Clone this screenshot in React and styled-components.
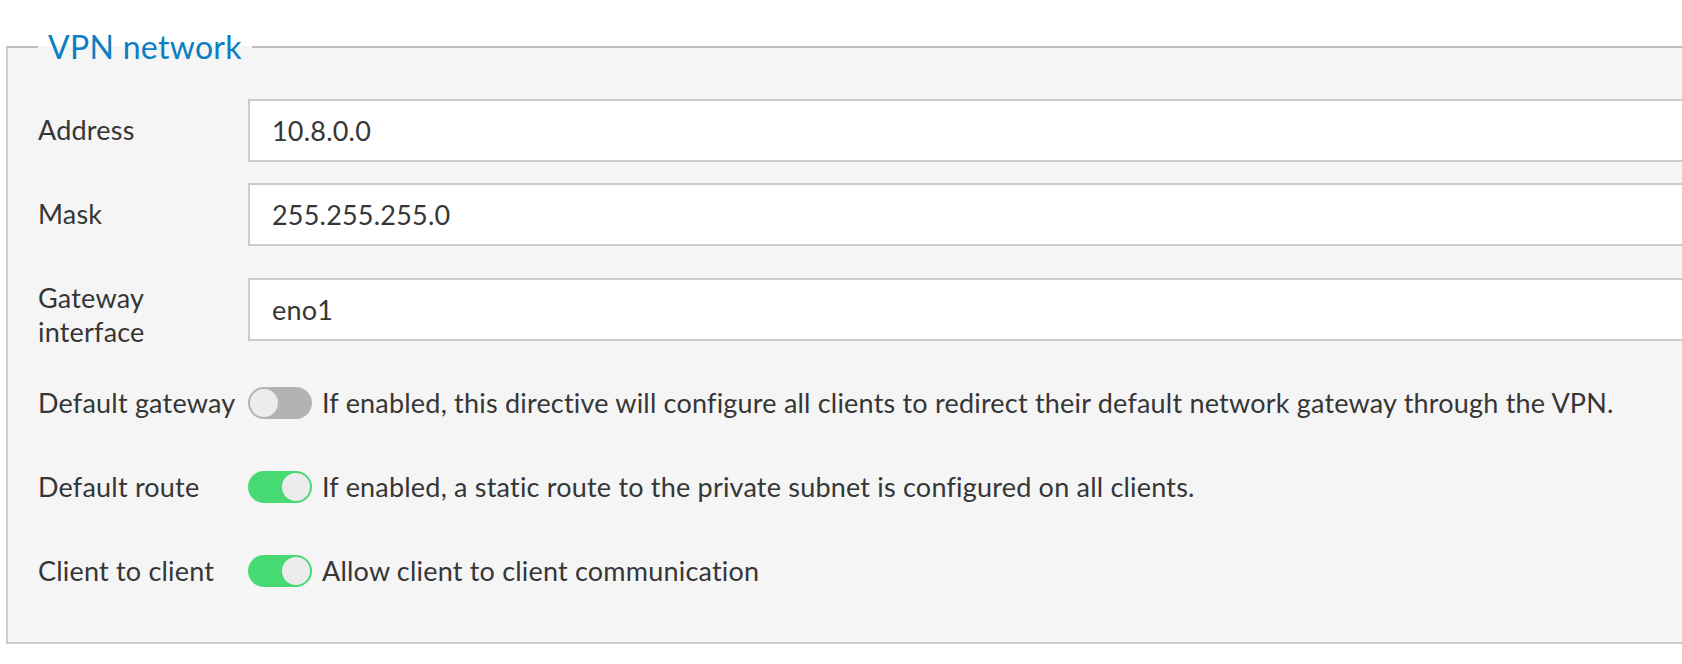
import React from "react";
import styled, { createGlobalStyle } from "styled-components";

const FONT = `Lato, "Liberation Sans", sans-serif`;

const GlobalStyle = createGlobalStyle`
    html, body {
        margin: 0;
        padding: 0;
        background: #fff;
        overflow: hidden;
    }
    body {
        font-family: ${FONT};
        color: #363636;
    }
`

const Page = styled.div`
    padding: 27px 0 0 6px;
    width: 1900px;
`

const Fieldset = styled.fieldset`
    margin: 0;
    padding: 32px 30px 19px 30px;
    border: 2px solid #cccccc;
    border-top-color: #bdbdbd;
    background: #f5f5f5;
    min-width: 0;
`

const Legend = styled.legend`
    padding: 0 10px;
    font-family: ${FONT};
    font-size: 32px;
    line-height: 40px;
    letter-spacing: 0.3px;
    color: #0b7fc1;
`

const FieldRow = styled.div`
    display: flex;
    align-items: flex-start;
    min-height: 63px;
    margin-bottom: 21px;
`

const Label = styled.label`
    flex: 0 0 210px;
    padding: 14px 0 1px 0;
    font-size: 27px;
    line-height: 34px;
    letter-spacing: 0.2px;
    color: #363636;
`

const TextInput = styled.input`
    flex: 1;
    box-sizing: border-box;
    height: 63px;
    margin: ${(p) => p.$offset || 0}px 0 0 0;
    padding: 0 22px;
    border: 2px solid #cccccc;
    border-radius: 0;
    background: #fff;
    font-family: ${FONT};
    font-size: 27px;
    letter-spacing: 0.2px;
    color: #363636;
    outline: none;
`

const ToggleRow = styled.div`
    display: flex;
    align-items: center;
    min-height: 63px;
    margin-bottom: 21px;
`

const ToggleLabel = styled(Label)`
    padding: 0;
`

const Track = styled.span`
    position: relative;
    flex: 0 0 64px;
    box-sizing: border-box;
    height: 32px;
    margin-right: 10px;
    border-radius: 16px;
    border: 2px solid ${(p) => (p.$on ? "#48da72" : "#b3b3b3")};
    background: ${(p) => (p.$on ? "#48da72" : "#b3b3b3")};
`

const Knob = styled.span`
    position: absolute;
    top: 0;
    left: ${(p) => (p.$on ? "32px" : "0")};
    width: 28px;
    height: 28px;
    border-radius: 50%;
    background: #ececec;
`

const Help = styled.span`
    font-size: 27px;
    line-height: 34px;
    letter-spacing: 0.2px;
    color: #363636;
    white-space: nowrap;
`

const Switch = ({ on }) => (
    <Track $on={on}>
        <Knob $on={on} />
    </Track>
);

const FIELDS = [
    { label: "Address", value: "10.8.0.0" },
    { label: "Mask", value: "255.255.255.0" },
    { label: <>Gateway<br />interface</>, value: "eno1", offset: 11 },
];

const TOGGLES = [
    {
        label: "Default gateway",
        on: false,
        help: "If enabled, this directive will configure all clients to redirect their default network gateway through the VPN.",
    },
    {
        label: "Default route",
        on: true,
        help: "If enabled, a static route to the private subnet is configured on all clients.",
    },
    {
        label: "Client to client",
        on: true,
        help: "Allow client to client communication",
    },
];

export default function App() {
    return (
        <Page>
            <GlobalStyle />
            <Fieldset>
                <Legend>VPN network</Legend>
                {FIELDS.map((f, i) => (
                    <FieldRow key={"field-" + i}>
                        <Label>{f.label}</Label>
                        <TextInput $offset={f.offset} defaultValue={f.value} />
                    </FieldRow>
                ))}
                {TOGGLES.map((t, i) => (
                    <ToggleRow key={"toggle-" + i}>
                        <ToggleLabel>{t.label}</ToggleLabel>
                        <Switch on={t.on} />
                        <Help>{t.help}</Help>
                    </ToggleRow>
                ))}
            </Fieldset>
        </Page>
    );
}
